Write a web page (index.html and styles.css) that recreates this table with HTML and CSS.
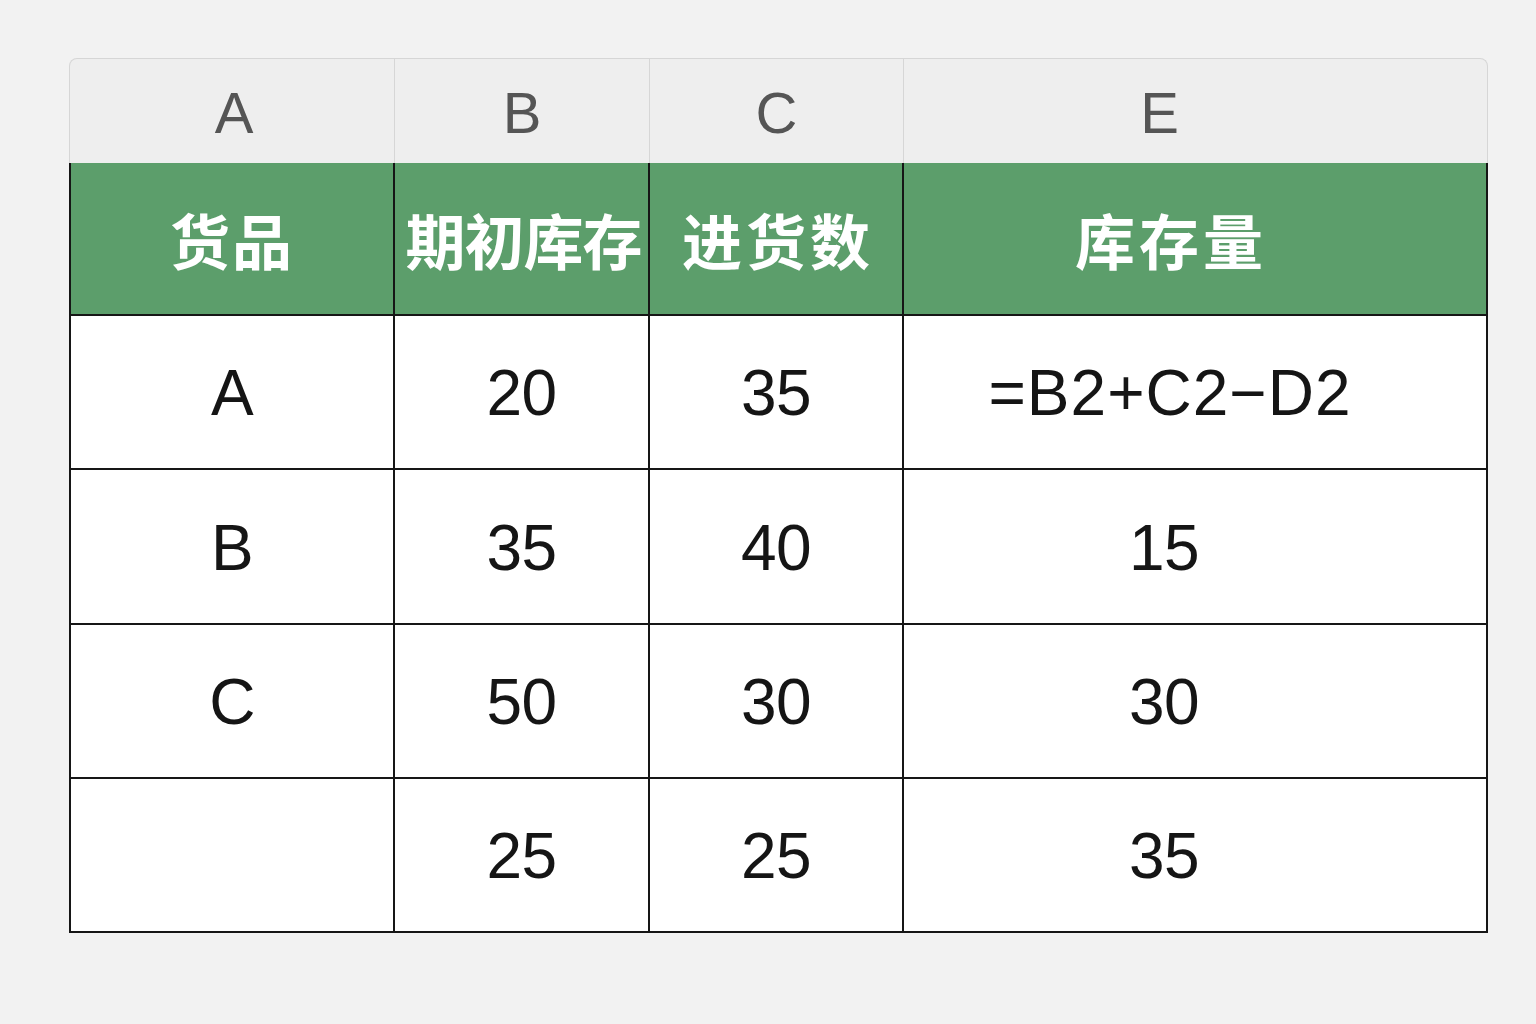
FILE: index.html
```html
<!DOCTYPE html>
<html lang="zh-CN">
<head>
<meta charset="utf-8">
<title>库存表</title>
<link rel="stylesheet" href="styles.css">
</head>
<body>
<div class="sheet">
  <div class="col-heads">
    <div class="ch">A</div>
    <div class="ch">B</div>
    <div class="ch">C</div>
    <div class="ch ch-e">E</div>
  </div>
  <div class="grid">
    <div class="cell head">货品</div>
    <div class="cell head tight">期初库存</div>
    <div class="cell head wide">进货数</div>
    <div class="cell head col-e">库存量</div>

    <div class="cell">A</div>
    <div class="cell">20</div>
    <div class="cell">35</div>
    <div class="cell col-e formula">=B2+C2−D2</div>

    <div class="cell">B</div>
    <div class="cell">35</div>
    <div class="cell">40</div>
    <div class="cell col-e e-num">15</div>

    <div class="cell">C</div>
    <div class="cell">50</div>
    <div class="cell">30</div>
    <div class="cell col-e e-num">30</div>

    <div class="cell"></div>
    <div class="cell">25</div>
    <div class="cell">25</div>
    <div class="cell col-e e-num">35</div>
  </div>
</div>
</body>
</html>
```

FILE: styles.css
```css
* { box-sizing: border-box; }

html, body {
  margin: 0;
  padding: 0;
  background: #f2f2f2;
}

body {
  font-family: "Liberation Sans", Arial, "Noto Sans CJK SC", sans-serif;
  color: #151515;
}

.sheet {
  width: 1419px;
  margin: 58px 0 0 69px;
}

.col-heads {
  display: grid;
  grid-template-columns: 324px 255px 254px 584px;
  height: 105px;
  background: #eeeeee;
  border: 1px solid #d6d6d6;
  border-bottom: none;
  border-radius: 8px 8px 0 0;
}

.ch {
  display: flex;
  align-items: center;
  justify-content: center;
  font-size: 58px;
  color: #555555;
  border-left: 1px solid #d6d6d6;
  padding-top: 2px;
}

.ch:first-child { border-left: none; padding-left: 4px; }

.ch-e { padding-right: 72px; }

.grid {
  display: grid;
  grid-template-columns: 324px 255px 254px 584px;
  grid-template-rows: 153px 154px 155px 154px 154px;
  border-left: 2px solid #161616;
}

.cell {
  display: flex;
  align-items: center;
  justify-content: center;
  background: #ffffff;
  border-right: 2px solid #161616;
  border-bottom: 2px solid #161616;
  font-size: 64px;
  letter-spacing: -0.5px;
  padding-top: 2px;
}

.cell.head {
  background: #5c9e6b;
  color: #ffffff;
  font-family: "Noto Sans CJK SC", "Liberation Sans", sans-serif;
  font-weight: 700;
  font-size: 60px;
  letter-spacing: 2px;
  padding-top: 0;
}

.cell.head.tight { letter-spacing: -1px; padding-left: 4px; }
.cell.head.wide { letter-spacing: 4px; padding-left: 4px; }

.cell.col-e { padding-right: 50px; }
.cell.col-e.e-num { padding-right: 62px; }
.cell.col-e.formula { letter-spacing: 1px; }
.cell.head.col-e { padding-right: 48px; letter-spacing: 4px; }
```
